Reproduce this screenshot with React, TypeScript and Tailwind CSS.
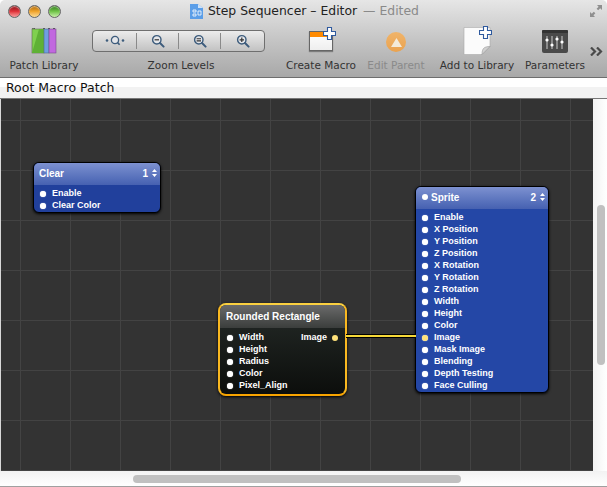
import React from "react";

const Row = ({ label }: { label: string }) => (
  <div className="flex h-3 items-center">
    <span className="ml-[6px] size-[6px] rounded-full bg-white shadow-[0_0_1px_#fff]" />
    <span className="ml-[6px]">{label}</span>
  </div>
);

const Stepper = () => (
  <svg width="5" height="8" viewBox="0 0 5 8" className="ml-[4px]">
    <path d="M2.5 0 L5 3 H0 Z M2.5 8 L5 5 H0 Z" fill="#fff" />
  </svg>
);

const Tool = ({ label, w, children, dim, labelClass }: { label: string; w: string; children: React.ReactNode; dim?: boolean; labelClass?: string }) => (
  <div className={`flex flex-col items-center ${w}`}>
    <div className="flex h-[30px] items-center justify-center">{children}</div>
    <div className={`mt-[2px] whitespace-nowrap text-[10.5px] leading-[14px] ${dim ? "text-[#8a8a8a]" : "text-[#333]"} ${labelClass ?? ""}`}>{label}</div>
  </div>
);

const Plus = () => (
  <svg width="13" height="13" viewBox="0 0 13 13" className="absolute -right-[1px] -top-[1px]">
    <path d="M4.5 .5h4v4h4v4h-4v4h-4v-4h-4v-4h4z" fill="#fff" stroke="#2f5a9e" strokeWidth="1.1" />
  </svg>
);

const Mag = ({ kind }: { kind: "-" | "=" | "+" }) => (
  <svg width="14" height="14" viewBox="0 0 14 14">
    <circle cx="5.8" cy="5.8" r="4.2" fill="#e4e6ea" stroke="#3d5c7c" strokeWidth="1.4" />
    <path d="M9 9l3.6 3.6" stroke="#3d5c7c" strokeWidth="2" strokeLinecap="round" />
    {kind === "-" && <path d="M3.6 5.8h4.4" stroke="#333" strokeWidth="1.2" />}
    {kind === "=" && <path d="M3.6 4.8h4.4M3.6 6.9h4.4" stroke="#333" strokeWidth="1.1" />}
    {kind === "+" && <path d="M3.6 5.8h4.4M5.8 3.6v4.4" stroke="#333" strokeWidth="1.2" />}
  </svg>
);

export default function App() {
  const sprite = ["Enable","X Position","Y Position","Z Position","X Rotation","Y Rotation","Z Rotation","Width","Height","Color","Image","Mask Image","Blending","Depth Testing","Face Culling"];
  const rr = ["Width","Height","Radius","Color","Pixel_Align"];
  return (
    <div className="flex h-[487px] w-[607px] flex-col overflow-hidden bg-white font-['DejaVu_Sans',sans-serif]">
      <div className="relative h-[78px] shrink-0 rounded-t-[5px] border-b border-[#6e6e6e] bg-gradient-to-b from-[#e6e6e6] via-[#c6c6c6] to-[#a8a8a8]">
        <div className="flex h-[22px] items-center pl-[8px]">
          {[
            "from-[#8a0f14] via-[#e0343c] to-[#f79aa0]",
            "from-[#b06a08] via-[#f0a52c] to-[#fbdc8e]",
            "from-[#2e7d1a] via-[#72c44a] to-[#c8f0a8]",
          ].map((c) => (
            <span key={c} className={`mr-[7px] size-[13px] rounded-full border border-[#666] bg-gradient-to-b shadow-[inset_0_1px_1px_#ffffff80] ${c}`} />
          ))}
          <div className="ml-[122px] flex items-center text-[12.4px] text-[#222]">
            <svg width="13" height="16" viewBox="0 0 13 16" className="mr-[5px]">
              <path d="M0 1h8l5 4v11H0z" fill="#5b9ee8" />
              <path d="M8 1l5 4H8z" fill="#cfe3fa" />
              <path d="M3 7h3v2H3zM3 11h3v2H3zM8 8h3v4H8z" fill="none" stroke="#fff" strokeWidth=".8" />
            </svg>
            <span>Step Sequencer – Editor</span>
            <span className="ml-[6px] text-[#8a8a8a]">— Edited</span>
          </div>
          <svg width="14" height="14" viewBox="0 0 14 14" className="ml-auto mr-[4px]">
            <path d="M8 1h5v5l-1.8-1.8-2 2-1.6-1.4 2-2zM1 13v-5l1.8 1.8 2-2 1.6 1.4-2 2L6 13z" fill="#8f8f8f" />
          </svg>
        </div>
        <div className="flex pt-[4px]">
          <Tool label="Patch Library" w="ml-[4px] w-[80px]">
            <svg width="26" height="26" viewBox="0 0 26 26">
              <path d="M1 1l2-1 1 1M12 1l1-1 1 1M17 1l1-1 1 1M22 1l1-1 1 1" stroke="#333" fill="none" strokeWidth=".8" />
              <rect x="1" y="1" width="12" height="24" fill="#7fd04e" stroke="#5c6b50" strokeWidth=".6" />
              <path d="M8 1h5v24H1z" fill="#5fb135" />
              <rect x="13" y="1" width="5" height="24" fill="#6f9fe0" stroke="#4b6a8e" strokeWidth=".6" />
              <rect x="18" y="1" width="7" height="24" fill="#c168df" stroke="#7a4b8e" strokeWidth=".6" />
            </svg>
          </Tool>
          <Tool label="Zoom Levels" w="ml-[8px] w-[173px]" labelClass="pl-[5px]">
            <div className="flex h-[22px] w-[173px] items-center rounded-[4px] border border-[#6f6f6f] bg-gradient-to-b from-[#ececec] to-[#c2c2c2]">
              <div className="flex h-[16px] w-[44px] items-center justify-center border-r border-[#8a8a8a]">
                <svg width="20" height="14" viewBox="0 0 20 14">
                  <circle cx="10" cy="6" r="3.6" fill="#e4e6ea" stroke="#3d5c7c" strokeWidth="1.3" />
                  <path d="M12.6 8.6l2 2.2" stroke="#3d5c7c" strokeWidth="1.6" />
                  <circle cx="2" cy="6.5" r="1.3" fill="#3d5c7c" />
                  <circle cx="18" cy="6.5" r="1.3" fill="#3d5c7c" />
                </svg>
              </div>
              <div className="flex h-[16px] w-[42px] items-center justify-center border-r border-[#8a8a8a]"><Mag kind="-" /></div>
              <div className="flex h-[16px] w-[42px] items-center justify-center border-r border-[#8a8a8a]"><Mag kind="=" /></div>
              <div className="flex h-[16px] flex-1 items-center justify-center"><Mag kind="+" /></div>
            </div>
          </Tool>
          <Tool label="Create Macro" w="ml-[14px] w-[84px]">
            <div className="relative h-[26px] w-[28px] pl-[2px] pt-[3px]">
              <div className="h-[20px] w-[24px] border border-[#666] bg-gradient-to-b from-white to-[#eee] shadow-[0_1px_1px_#0005]">
                <div className="h-[5px] bg-[#ff8a00]" />
              </div>
              <Plus />
            </div>
          </Tool>
          <Tool label="Edit Parent" w="ml-[1px] w-[64px]" dim>
            <div className="mt-[2px] flex size-[20px] items-center justify-center rounded-full bg-gradient-to-b from-[#f0b46a] to-[#eaa24e]">
              <svg width="11" height="9" viewBox="0 0 11 9"><path d="M5.5 0L11 9H0z" fill="#f4ead8" /></svg>
            </div>
          </Tool>
          <Tool label="Add to Library" w="ml-[6px] w-[86px]">
            <div className="relative h-[28px] w-[28px]">
              <svg width="28" height="28" viewBox="0 0 28 28">
                <path d="M1 .5h26v19l-8 8H1z" fill="#fbfbfb" stroke="#aaa" strokeWidth=".6" />
                <path d="M19 27.5c0-6 2-8 8-8z" fill="#d0d0d0" stroke="#888" strokeWidth=".5" />
              </svg>
              <Plus />
            </div>
          </Tool>
          <Tool label="Parameters" w="ml-[2px] w-[66px]">
            <svg width="26" height="23" viewBox="0 0 26 23">
              <rect width="26" height="23" rx="2" fill="#4a4a4a" />
              <rect width="26" height="3" rx="1" fill="#333" />
              <path d="M5 6v13M10 6v13M15 6v13M20 6v13" stroke="#ccc" strokeWidth="1" />
              <circle cx="5" cy="10" r="1.6" fill="#fff" /><circle cx="10" cy="15" r="1.6" fill="#fff" />
              <circle cx="15" cy="9" r="1.6" fill="#fff" /><circle cx="20" cy="12" r="1.6" fill="#fff" />
            </svg>
          </Tool>
          <svg width="14" height="9" viewBox="0 0 14 9" className="ml-[2px] mt-[21px]">
            <path d="M1 .5l4 4-4 4M7 .5l4 4-4 4" fill="none" stroke="#4a4a4a" strokeWidth="2.2" />
          </svg>
        </div>
      </div>

      <div className="flex h-[21px] shrink-0 items-center border-b border-[#777] bg-[linear-gradient(to_bottom,#fff_45%,#f2f2f2_45%)] pl-[6px] text-[12.5px] text-[#111]">
        Root Macro Patch
      </div>

      <div className="flex h-[372px] shrink-0">
        <div className="w-px shrink-0 bg-[#d8d8d8]" />
        <div className="relative h-[372px] w-[592px] shrink-0 bg-[#333333] bg-[linear-gradient(to_right,#434343_1px,transparent_1px),linear-gradient(to_bottom,#434343_1px,transparent_1px)] bg-[size:50px_50px] bg-[position:19px_21px] font-['Liberation_Sans',sans-serif] text-[9px] font-bold text-white">
          <div className="absolute left-[32px] top-[63px] h-[51px] w-[128px] overflow-hidden rounded-[6px] border border-black bg-[#21409c] shadow-[0_1px_3px_#000]">
            <div className="flex h-[22px] items-center bg-gradient-to-b from-[#7d91d0] to-[#4661b1] pb-[2px] pl-[5px] pr-[3px] text-[10px]">
              <span>Clear</span><span className="ml-auto">1</span><Stepper />
            </div>
            <div className="pt-[3px]">
              <Row label="Enable" /><Row label="Clear Color" />
            </div>
          </div>

          <div className="absolute left-[414px] top-[87px] h-[207px] w-[134px] overflow-hidden rounded-[6px] border border-black bg-[#2447a6] shadow-[0_1px_3px_#000]">
            <div className="flex h-[22px] items-center bg-gradient-to-b from-[#7d91d0] to-[#4661b1] pb-[2px] pl-[6px] pr-[3px] text-[10px]">
              <span className="mr-[3px] size-[6px] rounded-full bg-white" />
              <span>Sprite</span><span className="ml-auto">2</span><Stepper />
            </div>
            <div className="pt-[3px] [&>div:nth-child(11)>span:first-child]:bg-[#ffe27a]">
              {sprite.map((s) => <Row key={s} label={s} />)}
            </div>
          </div>

          <div className="absolute left-[217px] top-[204px] h-[93px] w-[129px] overflow-hidden rounded-[8px] border-2 border-t-[#fbd040] border-r-[#f9b820] border-b-[#f8a400] border-l-[#f9b820] bg-gradient-to-b from-[#252b28] to-[#0c0e0c] shadow-[0_1px_3px_#000]">
            <div className="flex h-[23px] items-center bg-gradient-to-b from-[#6b6b6b] to-[#3b3e3c] pl-[6px] text-[10px]">
              Rounded Rectangle
            </div>
            <div className="relative pl-px pt-[4px]">
              {rr.map((s) => <Row key={s} label={s} />)}
              <div className="absolute right-[7px] top-[4px] flex h-3 items-center">
                <span>Image</span>
                <span className="ml-[5px] size-[6px] rounded-full bg-[#ffe27a]" />
              </div>
            </div>
          </div>

          <svg width="70" height="4" viewBox="0 0 70 4" className="absolute left-[345px] top-[235px]">
            <rect width="70" height="4" fill="#000" />
            <rect y="1" width="70" height="2" fill="#f5d838" />
          </svg>
        </div>
        <div className="relative flex-1 bg-gradient-to-r from-[#f2f2f2] to-white">
          <div className="absolute left-[4px] top-[106px] h-[160px] w-[8px] rounded-full bg-[#c0c0c0]" />
        </div>
      </div>

      <div className="flex h-[16px] shrink-0 items-center border-b border-[#a0a0a0] bg-gradient-to-b from-[#f2f2f2] to-white pl-[133px]">
        <div className="h-[8px] w-[328px] rounded-full bg-[#c0c0c0]" />
      </div>
    </div>
  );
}
